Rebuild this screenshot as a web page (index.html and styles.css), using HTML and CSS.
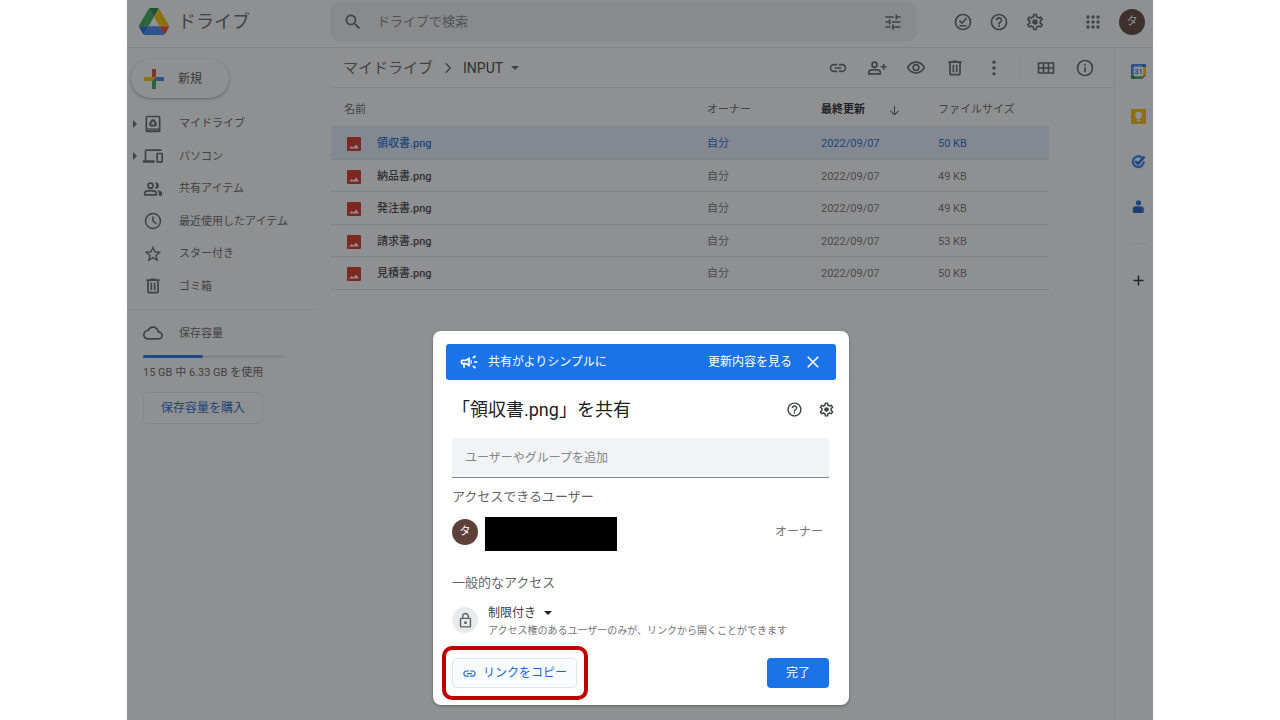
FILE: index.html
```html
<!DOCTYPE html>
<html lang="ja">
<head>
<meta charset="utf-8">
<meta name="viewport" content="width=device-width, initial-scale=1">
<title>INPUT - ドライブ</title>
<link rel="stylesheet" href="styles.css">
</head>
<body>
<svg class="sprite" aria-hidden="true">
  <symbol id="i-search" viewBox="0 0 24 24"><path d="M15.500 14h-.79l-.28-.27C15.410 12.590 16 11.110 16 9.500 16 5.910 13.090 3 9.500 3S3 5.910 3 9.500 5.910 16 9.500 16c1.610 0 3.090-.59 4.230-1.570l.27.28v.79l5 4.990L20.490 19l-4.990-5zm-6 0C7.010 14 5 11.990 5 9.500S7.010 5 9.500 5 14 7.010 14 9.500 11.990 14 9.500 14z"/></symbol>
  <symbol id="i-tune" viewBox="0 0 24 24"><path d="M3 17v2h6v-2H3zM3 5v2h10V5H3zm10 16v-2h8v-2h-8v-2h-2v6h2zM7 9v2H3v2h4v2h2V9H7zm14 4v-2H11v2h10zm-6-4h2V7h4V5h-4V3h-2v6z"/></symbol>
  <symbol id="i-offline" viewBox="0 0 24 24"><g fill="none" stroke="currentColor" stroke-width="2"><circle cx="12" cy="12" r="9"/><path d="M7.500 16.500h9M7.800 10.300l3 3 5.600-5.800"/></g></symbol>
  <symbol id="i-help" viewBox="0 0 24 24"><path d="M11 18h2v-2h-2v2zm1-16C6.480 2 2 6.480 2 12s4.480 10 10 10 10-4.480 10-10S17.520 2 12 2zm0 18c-4.410 0-8-3.590-8-8s3.590-8 8-8 8 3.590 8 8-3.590 8-8 8zm0-14c-2.210 0-4 1.790-4 4h2c0-1.100.9-2 2-2s2 .9 2 2c0 2-3 1.750-3 5h2c0-2.250 3-2.500 3-5 0-2.210-1.790-4-4-4z"/></symbol>
  <symbol id="i-settings" viewBox="0 0 24 24"><path d="M19.430 12.980c.04-.32.07-.64.07-.98 0-.34-.03-.66-.07-.98l2.110-1.650c.19-.15.24-.42.12-.64l-2-3.460c-.09-.16-.26-.25-.44-.25-.06 0-.12.01-.17.03l-2.490 1c-.52-.4-1.080-.73-1.690-.98l-.38-2.650C14.460 2.180 14.250 2 14 2h-4c-.25 0-.46.18-.49.42l-.38 2.650c-.61.25-1.170.59-1.690.98l-2.490-1c-.06-.02-.12-.03-.18-.03-.17 0-.34.09-.43.25l-2 3.460c-.13.22-.07.49.12.64l2.110 1.650c-.04.32-.07.65-.07.98 0 .33.03.66.07.98l-2.110 1.650c-.19.15-.24.42-.12.64l2 3.460c.09.16.26.25.44.25.06 0 .12-.01.17-.03l2.490-1c.52.4 1.080.73 1.690.98l.38 2.650c.03.24.24.42.49.42h4c.25 0 .46-.18.49-.42l.38-2.650c.61-.25 1.170-.59 1.690-.98l2.490 1c.06.02.12.03.18.03.17 0 .34-.09.43-.25l2-3.460c.12-.22.07-.49-.12-.64l-2.110-1.650zm-1.980-1.710c.04.31.05.52.05.73 0 .21-.02.43-.05.73l-.14 1.130.89.7 1.080.84-.7 1.210-1.270-.51-1.040-.42-.9.68c-.43.32-.84.56-1.250.73l-1.060.43-.16 1.130-.2 1.350h-1.400l-.19-1.350-.16-1.130-1.060-.43c-.43-.18-.83-.41-1.230-.71l-.91-.7-1.060.43-1.270.51-.7-1.210 1.080-.84.89-.7-.14-1.130c-.03-.31-.05-.54-.05-.74s.02-.43.05-.73l.14-1.130-.89-.7-1.080-.84.7-1.210 1.270.51 1.040.42.9-.68c.43-.32.84-.56 1.250-.73l1.060-.43.16-1.130.2-1.350h1.390l.19 1.350.16 1.130 1.060.43c.43.18.83.41 1.230.71l.91.7 1.060-.43 1.270-.51.7 1.210-1.070.85-.89.7.14 1.130z"/><circle cx="12" cy="12" r="3.300"/></symbol>
  <symbol id="i-apps" viewBox="0 0 24 24"><circle cx="6" cy="6" r="2"/><circle cx="12" cy="6" r="2"/><circle cx="18" cy="6" r="2"/><circle cx="6" cy="12" r="2"/><circle cx="12" cy="12" r="2"/><circle cx="18" cy="12" r="2"/><circle cx="6" cy="18" r="2"/><circle cx="12" cy="18" r="2"/><circle cx="18" cy="18" r="2"/></symbol>
  <symbol id="i-link" viewBox="0 0 24 24"><path d="M3.900 12c0-1.710 1.390-3.100 3.100-3.100h4V7H7c-2.760 0-5 2.240-5 5s2.240 5 5 5h4v-1.900H7c-1.710 0-3.100-1.390-3.100-3.100zM8 13h8v-2H8v2zm9-6h-4v1.900h4c1.710 0 3.100 1.390 3.100 3.100s-1.390 3.100-3.100 3.100h-4V17h4c2.760 0 5-2.240 5-5s-2.240-5-5-5z"/></symbol>
  <symbol id="i-person-add" viewBox="0 0 24 24"><g fill="none" stroke="currentColor" stroke-width="2"><circle cx="9" cy="8" r="3"/><path d="M2 19v-2c0-2 4-3 7-3s7 1 7 3v2zM20 7v7M16.500 10.500h7"/></g></symbol>
  <symbol id="i-eye" viewBox="0 0 24 24"><path d="M12 6c3.790 0 7.170 2.130 8.820 5.500C19.170 14.870 15.790 17 12 17s-7.170-2.130-8.820-5.500C4.830 8.130 8.210 6 12 6m0-2C7 4 2.730 7.110 1 11.500 2.730 15.890 7 19 12 19s9.270-3.110 11-7.500C21.270 7.110 17 4 12 4zm0 5c1.380 0 2.500 1.120 2.500 2.500S13.380 14 12 14s-2.500-1.120-2.500-2.500S10.620 9 12 9m0-2c-2.480 0-4.500 2.020-4.500 4.500S9.520 16 12 16s4.500-2.020 4.500-4.500S14.480 7 12 7z"/></symbol>
  <symbol id="i-trash" viewBox="0 0 24 24"><path d="M9 3v1H4v2h1v13c0 1.100.9 2 2 2h10c1.100 0 2-.9 2-2V6h1V4h-5V3H9zm-2 3h10v13H7V6zm2 2v9h2V8H9zm4 0v9h2V8h-2z"/></symbol>
  <symbol id="i-more" viewBox="0 0 24 24"><circle cx="12" cy="5" r="2"/><circle cx="12" cy="12" r="2"/><circle cx="12" cy="19" r="2"/></symbol>
  <symbol id="i-grid" viewBox="0 0 24 24"><path fill="none" stroke="currentColor" stroke-width="2" d="M3 6h18v12H3zM3 12h18M9 6v12M15 6v12"/></symbol>
  <symbol id="i-info" viewBox="0 0 24 24"><circle cx="12" cy="12" r="9" fill="none" stroke="currentColor" stroke-width="2"/><path d="M11 7h2v2h-2zM11 11h2v6h-2z"/></symbol>
  <symbol id="i-people" viewBox="0 0 24 24"><g fill="none" stroke="currentColor" stroke-width="2"><circle cx="9" cy="8" r="3"/><path d="M2 19v-2c0-2 4-3 7-3s7 1 7 3v2z"/></g><path d="M14.500 4.200c2.400-.8 4.700 1.200 4.500 3.800-.1 2.500-2.200 4.300-4.500 3.800 1.900-2.300 1.900-5.300 0-7.600zM17 13.200c3 .5 6 1.700 6 3.800v3h-4v-3c0-1.600-.8-2.800-2-3.800z"/></symbol>
  <symbol id="i-clock" viewBox="0 0 24 24"><g fill="none" stroke="currentColor" stroke-width="1.800"><circle cx="12" cy="12" r="9"/><path d="M12 6.500V12l4 3.500"/></g></symbol>
  <symbol id="i-star" viewBox="0 0 24 24"><path d="M22 9.240l-7.190-.62L12 2 9.190 8.630 2 9.240l5.460 4.730L5.820 21 12 17.270 18.180 21l-1.630-7.030L22 9.240zM12 15.400l-3.760 2.270 1-4.280-3.320-2.880 4.380-.38L12 6.100l1.710 4.040 4.380.38-3.320 2.880 1 4.280L12 15.400z"/></symbol>
  <symbol id="i-cloud" viewBox="0 0 24 24"><path d="M19.350 10.040C18.670 6.590 15.640 4 12 4 9.110 4 6.600 5.640 5.350 8.040 2.340 8.360 0 10.910 0 14c0 3.310 2.690 6 6 6h13c2.760 0 5-2.240 5-5 0-2.640-2.050-4.780-4.650-4.960zM19 18H6c-2.210 0-4-1.790-4-4 0-2.050 1.530-3.760 3.560-3.970l1.070-.11.5-.95C8.080 7.140 9.940 6 12 6c2.620 0 4.880 1.860 5.390 4.430l.3 1.500 1.530.11c1.560.1 2.780 1.410 2.780 2.960 0 1.650-1.350 3-3 3z"/></symbol>
  <symbol id="i-devices" viewBox="0 0 24 24"><path d="M4 6h18V4H4c-1.100 0-2 .9-2 2v11H0v3h14v-3H4V6zm19 2h-6c-.55 0-1 .45-1 1v10c0 .55.45 1 1 1h6c.55 0 1-.45 1-1V9c0-.55-.45-1-1-1zm-1 10h-4v-8h4v8z"/></symbol>
  <symbol id="i-mydrive" viewBox="0 0 24 24"><rect x="4" y="3" width="16" height="18" rx="1" fill="none" stroke="currentColor" stroke-width="2"/><path opacity=".7" d="M4 17h16v4H4z"/><path fill="none" stroke="currentColor" stroke-width="2.400" stroke-linejoin="round" d="M11 7.500h2l2.600 4.500-1 1.700H9.400l-1-1.700z"/></symbol>
  <symbol id="i-image" viewBox="0 0 14 14"><rect width="14" height="14" rx="1" fill="#d93025"/><path fill="#fff" d="M2 11.500L4.700 9l1.700 1.500L9.200 7.500l2.800 4z"/></symbol>
  <symbol id="i-arrow" viewBox="0 0 24 24"><path fill="none" stroke="currentColor" stroke-width="2" d="M12 3v17M4.500 12.500L12 20l7.500-7.500"/></symbol>
  <symbol id="i-close" viewBox="0 0 24 24"><path fill="none" stroke="currentColor" stroke-width="2.200" d="M5 5l14 14M19 5L5 19"/></symbol>
  <symbol id="i-campaign" viewBox="0 0 24 24"><path d="M18 11v2h4v-2zM16 17.610l3.200 2.390 1.200-1.600-3.200-2.400zM20.400 5.600L19.200 4 16 6.400 17.200 8zM4 9c-1.100 0-2 .9-2 2v2c0 1.100.9 2 2 2h1v4h2v-4h1l5 3V6L8 9H4zm5.030 1.710L11 9.530v4.940l-1.970-1.180-.48-.29H4v-2h4.550zM15.500 12c0-1.330-.58-2.530-1.500-3.350v6.690c.92-.81 1.500-2.010 1.500-3.340z"/></symbol>
  <symbol id="i-lock" viewBox="0 0 24 24"><path d="M18 8h-1V6c0-2.760-2.240-5-5-5S7 3.240 7 6v2H6c-1.100 0-2 .9-2 2v10c0 1.100.9 2 2 2h12c1.100 0 2-.9 2-2V10c0-1.100-.9-2-2-2zM9 6c0-1.660 1.340-3 3-3s3 1.340 3 3v2H9V6zm9 14H6V10h12v10zm-6-3c1.100 0 2-.9 2-2s-.9-2-2-2-2 .9-2 2 .9 2 2 2z"/></symbol>
  <symbol id="i-plus" viewBox="0 0 24 24"><path fill="none" stroke="currentColor" stroke-width="2.400" d="M12 4v16M4 12h16"/></symbol>
</svg>

<div class="app">
  <header class="topbar">
    <a class="brand" href="#">
      <svg class="brand-logo" viewBox="0 0 87.300 78" aria-hidden="true">
        <path fill="#1967d2" d="M6.600 66.850l3.850 6.650c.8 1.400 1.950 2.500 3.300 3.300L27.500 53H0c0 1.550.4 3.100 1.200 4.500z"/>
        <path fill="#34a853" d="M43.650 25L29.900 1.200c-1.350.8-2.500 1.900-3.300 3.300l-25.400 44A9.060 9.060 0 0 0 0 53h27.500z"/>
        <path fill="#ea4335" d="M73.550 76.800c1.350-.8 2.500-1.900 3.300-3.300l1.600-2.750 7.650-13.250c.8-1.400 1.200-2.950 1.200-4.500H59.800l5.850 11.500z"/>
        <path fill="#188038" d="M43.650 25L57.400 1.200C56.050.4 54.500 0 52.900 0H34.400c-1.600 0-3.150.45-4.500 1.200z"/>
        <path fill="#4285f4" d="M59.800 53H27.500L13.750 76.800c1.350.8 2.900 1.200 4.500 1.200h50.800c1.600 0 3.150-.45 4.500-1.200z"/>
        <path fill="#fbbc04" d="M73.400 26.500l-12.700-22c-.8-1.400-1.950-2.500-3.300-3.300L43.650 25l16.150 28h27.450c0-1.550-.4-3.100-1.200-4.500z"/>
      </svg>
      <span>ドライブ</span>
    </a>
    <form class="search" role="search">
      <svg class="icon"><use href="#i-search"/></svg>
      <input class="search-input" type="search" placeholder="ドライブで検索" aria-label="ドライブで検索">
      <button class="icon-btn" type="button" aria-label="検索オプション"><svg class="icon"><use href="#i-tune"/></svg></button>
    </form>
    <div class="top-actions">
      <button class="icon-btn" aria-label="オフライン"><svg class="icon"><use href="#i-offline"/></svg></button>
      <button class="icon-btn" aria-label="サポート"><svg class="icon"><use href="#i-help"/></svg></button>
      <button class="icon-btn" aria-label="設定"><svg class="icon"><use href="#i-settings"/></svg></button>
      <button class="icon-btn apps-btn" aria-label="アプリ"><svg class="icon"><use href="#i-apps"/></svg></button>
      <button class="avatar" aria-label="アカウント">タ</button>
    </div>
  </header>

  <div class="body">
    <aside class="sidebar">
      <button class="new-btn">
        <svg class="icon" viewBox="0 0 20 20" aria-hidden="true"><path fill="#ea4335" d="M8 0h4v8H8z"/><path fill="#fbbc04" d="M0 8h12l-4 4H0z"/><path fill="#4285f4" d="M12 8h8v4h-8z"/><path fill="#34a853" d="M8 12l4-4v12H8z"/></svg>
        <span>新規</span>
      </button>
      <nav class="nav">
        <a class="nav-item expandable" href="#"><svg class="icon"><use href="#i-mydrive"/></svg><span>マイドライブ</span></a>
        <a class="nav-item expandable" href="#"><svg class="icon"><use href="#i-devices"/></svg><span>パソコン</span></a>
        <a class="nav-item" href="#"><svg class="icon"><use href="#i-people"/></svg><span>共有アイテム</span></a>
        <a class="nav-item" href="#"><svg class="icon"><use href="#i-clock"/></svg><span>最近使用したアイテム</span></a>
        <a class="nav-item" href="#"><svg class="icon"><use href="#i-star"/></svg><span>スター付き</span></a>
        <a class="nav-item" href="#"><svg class="icon"><use href="#i-trash"/></svg><span>ゴミ箱</span></a>
      </nav>
      <section class="storage">
        <a class="nav-item" href="#"><svg class="icon"><use href="#i-cloud"/></svg><span>保存容量</span></a>
        <div class="storage-detail">
          <div class="meter" role="img" aria-label="15 GB 中 6.33 GB を使用"><div class="meter-fill" style="width:42%"></div></div>
          <p class="storage-text">15 GB 中 6.33 GB を使用</p>
          <button class="buy-btn">保存容量を購入</button>
        </div>
      </section>
    </aside>

    <main class="main">
      <div class="toolbar">
        <nav class="crumbs" aria-label="パンくず">
          <a class="crumb" href="#">マイドライブ</a>
          <svg class="crumb-sep" viewBox="0 0 8 12" aria-hidden="true"><path fill="none" stroke="currentColor" stroke-width="1.200" d="M2 2l4 4-4 4"/></svg>
          <button class="crumb current">INPUT<span class="caret"></span></button>
        </nav>
        <div class="tools">
          <button class="icon-btn" aria-label="リンクを取得"><svg class="icon"><use href="#i-link"/></svg></button>
          <button class="icon-btn" aria-label="共有"><svg class="icon"><use href="#i-person-add"/></svg></button>
          <button class="icon-btn" aria-label="プレビュー"><svg class="icon"><use href="#i-eye"/></svg></button>
          <button class="icon-btn" aria-label="削除"><svg class="icon"><use href="#i-trash"/></svg></button>
          <button class="icon-btn" aria-label="その他の操作"><svg class="icon"><use href="#i-more"/></svg></button>
          <span class="tool-divider"></span>
          <button class="icon-btn" aria-label="ギャラリー表示"><svg class="icon"><use href="#i-grid"/></svg></button>
          <button class="icon-btn" aria-label="詳細を表示"><svg class="icon"><use href="#i-info"/></svg></button>
        </div>
      </div>
      <table class="files">
        <colgroup><col><col class="col-owner"><col class="col-date"><col class="col-size"></colgroup>
        <thead>
          <tr><th>名前</th><th>オーナー</th><th class="sorted"><span class="sort">最終更新<svg class="sort-arrow"><use href="#i-arrow"/></svg></span></th><th>ファイルサイズ</th></tr>
        </thead>
        <tbody>
          <tr class="selected"><td><span class="file"><svg class="file-icon"><use href="#i-image"/></svg>領収書.png</span></td><td>自分</td><td>2022/09/07</td><td>50 KB</td></tr>
          <tr><td><span class="file"><svg class="file-icon"><use href="#i-image"/></svg>納品書.png</span></td><td>自分</td><td>2022/09/07</td><td>49 KB</td></tr>
          <tr><td><span class="file"><svg class="file-icon"><use href="#i-image"/></svg>発注書.png</span></td><td>自分</td><td>2022/09/07</td><td>49 KB</td></tr>
          <tr><td><span class="file"><svg class="file-icon"><use href="#i-image"/></svg>請求書.png</span></td><td>自分</td><td>2022/09/07</td><td>53 KB</td></tr>
          <tr><td><span class="file"><svg class="file-icon"><use href="#i-image"/></svg>見積書.png</span></td><td>自分</td><td>2022/09/07</td><td>50 KB</td></tr>
        </tbody>
      </table>
    </main>

    <aside class="side-panel">
      <button class="panel-btn" aria-label="カレンダー"><svg class="panel-icon" viewBox="0 0 16 16"><path fill="#4285f4" d="M1 0h11v3H3v9H0V1z"/><path fill="#1967d2" d="M12 0h3l1 1v3h-4z"/><path fill="#fbbc04" d="M13 3h3v9h-3z"/><path fill="#34a853" d="M3 13h9v3H3z"/><path fill="#188038" d="M0 12h4v4H1l-1-1z"/><path fill="#ea4335" d="M12 12h4l-4 4z"/><path fill="#fff" d="M3 3h10v10H3z"/><text class="cal-day" x="8" y="11" text-anchor="middle">31</text></svg></button>
      <button class="panel-btn" aria-label="Keep"><svg class="panel-icon" viewBox="0 0 16 16"><rect width="16" height="16" rx="1" fill="#fbbc04"/><circle cx="8" cy="6.500" r="3.500" fill="#fff"/><path fill="#fff" d="M6 8h4v3H6zM6 11.700h4V13H6z"/></svg></button>
      <button class="panel-btn" aria-label="ToDo リスト"><svg class="panel-icon" viewBox="0 0 16 16"><path fill="none" stroke="#2684fc" stroke-width="2.600" d="M11.500 3.800A5.700 5.700 0 1 0 13.500 8"/><path fill="none" stroke="#1967d2" stroke-width="2.600" d="M4.500 7.500L7.500 10.300 14.500 2.700"/></svg></button>
      <button class="panel-btn" aria-label="連絡先"><svg class="panel-icon" viewBox="0 0 16 16"><circle cx="8" cy="4" r="2.800" fill="#1967d2"/><path fill="#4285f4" d="M5 8h6a3 3 0 0 1 3 3v2a2 2 0 0 1-2 2H4a2 2 0 0 1-2-2v-2a3 3 0 0 1 3-3z"/><path fill="#185abc" d="M5 8h5a2 2 0 0 1 2 2v5H4a2 2 0 0 1-2-2v-2a3 3 0 0 1 3-3z"/></svg></button>
      <hr class="panel-line">
      <button class="panel-btn add" aria-label="アドオンを取得"><svg class="panel-icon"><use href="#i-plus"/></svg></button>
    </aside>
  </div>

  <div class="scrim">
    <section class="dialog" role="dialog" aria-modal="true" aria-labelledby="dialog-title">
      <div class="banner">
        <svg class="banner-icon"><use href="#i-campaign"/></svg>
        <span class="banner-text">共有がよりシンプルに</span>
        <a class="banner-link" href="#">更新内容を見る</a>
        <button class="banner-close" aria-label="閉じる"><svg class="close-icon"><use href="#i-close"/></svg></button>
      </div>
      <div class="title-row">
        <h1 class="title" id="dialog-title">「領収書.png」を共有</h1>
        <button class="title-btn" aria-label="ヘルプ"><svg class="icon-small"><use href="#i-help"/></svg></button>
        <button class="title-btn" aria-label="共有設定"><svg class="icon-small"><use href="#i-settings"/></svg></button>
      </div>
      <div class="dialog-body">
        <input class="people-input" type="text" placeholder="ユーザーやグループを追加" aria-label="ユーザーやグループを追加">
        <h2 class="subhead">アクセスできるユーザー</h2>
        <div class="person">
          <span class="avatar">タ</span>
          <span class="redacted"></span>
          <span class="role">オーナー</span>
        </div>
        <h2 class="subhead general">一般的なアクセス</h2>
        <div class="access">
          <span class="lock"><svg class="icon-small"><use href="#i-lock"/></svg></span>
          <div class="access-text">
            <button class="access-level">制限付き<span class="caret"></span></button>
            <p class="access-note">アクセス権のあるユーザーのみが、リンクから開くことができます</p>
          </div>
        </div>
        <div class="dialog-actions">
          <div class="highlight"><button class="copy-btn"><svg class="link-icon"><use href="#i-link"/></svg>リンクをコピー</button></div>
          <button class="done-btn">完了</button>
        </div>
      </div>
    </section>
  </div>
</div>
</body>
</html>
```

FILE: styles.css
```css
* {
  box-sizing: border-box;
}

body {
  margin: 0;
  background: #fff;
  color: #3c4043;
  font-family: Roboto, "Noto Sans CJK JP", sans-serif;
  font-size: 11px;
  line-height: 16px;
}

button,
input {
  margin: 0;
  padding: 0;
  border: 0;
  background: none;
  color: inherit;
  font: inherit;
}

a {
  color: inherit;
  text-decoration: none;
}

h1,
h2,
p {
  margin: 0;
  font-weight: 400;
}

svg {
  display: block;
  flex: none;
  fill: currentColor;
}

.sprite {
  position: absolute;
  width: 0;
  height: 0;
}

.icon {
  width: 20px;
  height: 20px;
}

.icon-small {
  width: 17px;
  height: 17px;
}

.icon-btn {
  display: flex;
  align-items: center;
  justify-content: center;
  width: 36px;
  height: 36px;
}

.caret {
  border: 4px solid transparent;
  border-top-color: currentColor;
  border-bottom: 0;
}

.avatar {
  display: flex;
  align-items: center;
  justify-content: center;
  flex: none;
  width: 26px;
  height: 26px;
  border-radius: 50%;
  background: #5d4037;
  color: #fff;
  font-size: 11px;
}

/* Page frame */

.app {
  position: relative;
  display: flex;
  flex-direction: column;
  max-width: 1026px;
  min-height: 100vh;
  margin: 0 auto;
}

.topbar {
  display: flex;
  align-items: flex-start;
  height: 48px;
  border-bottom: 1px solid #e8eaed;
  color: #5f6368;
}

.brand {
  display: flex;
  align-items: center;
  gap: 9px;
  flex: none;
  width: 203px;
  height: 42px;
  padding-left: 12px;
  font-size: 18px;
}

.brand span {
  padding-top: 2px;
}

.brand-logo {
  width: 30px;
  height: 27px;
}

.search {
  display: flex;
  align-items: center;
  flex: 1;
  max-width: 586px;
  height: 39px;
  margin-top: 2px;
  padding: 0 5px 0 13px;
  border-radius: 8px;
  background: #f1f3f4;
}

.search-input {
  flex: 1;
  min-width: 0;
  padding-left: 14px;
  font-size: 13px;
  outline: 0;
}

.search-input::placeholder,
.people-input::placeholder {
  color: #80868b;
  opacity: 1;
}

.top-actions {
  display: flex;
  align-items: center;
  height: 43px;
  margin-left: auto;
  padding-right: 8px;
}

.apps-btn {
  margin: 0 8px 0 22px;
}

.body {
  display: flex;
  flex: 1;
}

/* Left navigation */

.sidebar {
  flex: none;
  width: 204px;
  padding-top: 11px;
  color: #5f6368;
}

.new-btn {
  display: flex;
  align-items: center;
  gap: 14px;
  width: 98px;
  height: 39px;
  margin-left: 4px;
  padding-left: 13px;
  border-radius: 20px;
  box-shadow: 0 1px 2px rgba(60, 64, 67, .3), 0 1px 3px 1px rgba(60, 64, 67, .15);
  color: #4d5156;
  font-size: 12px;
}

.nav {
  padding: 9px 0 7px;
}

.nav-item {
  display: flex;
  align-items: center;
  gap: 16px;
  height: 32px;
  padding-left: 16px;
}

.nav .nav-item:nth-child(odd) {
  height: 33px;
}

.nav-item span {
  padding-top: 1px;
}

.nav-item.expandable {
  padding-left: 6px;
}

.expandable::before {
  margin-right: -10px;
  border: 4px solid transparent;
  border-left-color: currentColor;
  border-right: 0;
  content: "";
}

.storage {
  width: 190px;
  padding-top: 7px;
  border-top: 1px solid #e8eaed;
}

.storage-detail {
  padding: 6px 0 0 16px;
}

.meter {
  width: 142px;
  height: 3px;
  border-radius: 2px;
  background: #e8eaed;
}

.meter-fill {
  height: 3px;
  border-radius: 2px;
  background: #1a73e8;
}

.storage-text {
  padding: 7px 0 11px;
}

.buy-btn {
  width: 120px;
  height: 32px;
  border: 1px solid #e8eaed;
  border-radius: 4px;
  color: #1967d2;
  font-size: 12px;
}

/* File list */

.main {
  flex: 1;
  min-width: 0;
}

.toolbar {
  display: flex;
  align-items: center;
  justify-content: space-between;
  height: 40px;
  padding: 0 10px 0 12px;
  border-bottom: 1px solid #e8eaed;
  color: #5f6368;
}

.crumbs {
  display: flex;
  align-items: center;
  gap: 10px;
  font-size: 15px;
}

.crumb-sep {
  width: 10px;
  height: 14px;
}

.current {
  display: flex;
  align-items: center;
  gap: 8px;
  color: #3c4043;
  font-size: 14px;
}

.current .caret {
  color: #5f6368;
}

.tools {
  display: flex;
  align-items: center;
}

.tools .icon-btn {
  width: 39px;
}

.tool-divider {
  width: 1px;
  height: 26px;
  margin: 0 6px;
  background: #f1f3f4;
}

.files {
  width: calc(100% - 65px);
  border-spacing: 0;
  table-layout: fixed;
  color: #70757a;
}

.col-owner {
  width: 114px;
}

.col-date {
  width: 117px;
}

.col-size {
  width: 111px;
}

.files th,
.files td {
  padding: 2px 0 0;
  border-bottom: 1px solid #e3e5e8;
  text-align: left;
}

.files th {
  height: 39px;
  padding-top: 6px;
  color: #5f6368;
  font-weight: 400;
}

.files th:first-child {
  padding-left: 13px;
}

.files .sorted {
  color: #202124;
  font-weight: 700;
}

.sort {
  display: flex;
  align-items: center;
  gap: 23px;
}

.sort-arrow {
  width: 13px;
  height: 13px;
  color: #5f6368;
}

.files td {
  height: 32px;
}

.files tr:nth-child(odd) td {
  height: 33px;
}

.file {
  display: flex;
  align-items: center;
  gap: 16px;
  padding-left: 16px;
  color: #3c4043;
  font-weight: 500;
}

.file-icon {
  width: 14px;
  height: 14px;
}

.selected,
.selected .file {
  color: #1967d2;
}

.selected td {
  background: #e8f0fe;
}

/* Right app strip */

.side-panel {
  display: flex;
  flex-direction: column;
  align-items: center;
  flex: none;
  width: 39px;
  padding: 1px 0 0 8px;
  border-left: 1px solid #e8eaed;
}

.panel-btn {
  display: flex;
  align-items: center;
  justify-content: center;
  width: 30px;
  height: 45px;
}

.panel-icon {
  width: 15px;
  height: 15px;
}

.cal-day {
  fill: #1967d2;
  font-size: 8px;
  font-weight: 500;
}

.panel-line {
  width: 16px;
  margin: 14px 0;
  border: 0;
  border-top: 1px solid #e8eaed;
}

.add {
  color: #202124;
}

/* Share dialog */

.scrim {
  position: absolute;
  inset: 0;
  display: flex;
  align-items: flex-end;
  justify-content: center;
  padding: 16px 0 15px 2px;
  background: rgba(32, 33, 36, .5);
}

.dialog {
  width: 416px;
  max-width: 100%;
  padding: 13px 13px 17px;
  border-radius: 8px;
  background: #fff;
  box-shadow: 0 1px 3px rgba(32, 33, 36, .4);
}

.banner {
  display: flex;
  align-items: center;
  height: 36px;
  padding: 0 14px 0 13px;
  border-radius: 3px;
  background: #1a73e8;
  color: #fff;
  font-size: 12px;
}

.banner-icon {
  width: 20px;
  height: 20px;
}

.banner-text {
  flex: 1;
  padding-left: 9px;
}

.banner-close {
  padding-left: 12px;
}

.close-icon {
  width: 18px;
  height: 18px;
}

.title-row {
  display: flex;
  align-items: center;
  gap: 12px;
  height: 58px;
  padding-left: 6px;
}

.title {
  flex: 1;
  padding-top: 1px;
  color: #202124;
  font-size: 18px;
  line-height: 24px;
}

.title-btn {
  display: flex;
  align-items: center;
  justify-content: center;
  width: 20px;
  height: 20px;
}

.dialog-body {
  padding: 0 7px 0 6px;
}

.people-input {
  display: block;
  width: 100%;
  height: 40px;
  padding: 0 13px;
  border-bottom: 1px solid #80868b;
  border-radius: 4px 4px 0 0;
  background: #f1f3f4;
  font-size: 12px;
}

.subhead {
  color: #5f6368;
  font-size: 13px;
  line-height: 37px;
}

.general {
  margin-top: 17px;
}

.person {
  display: flex;
  align-items: center;
  height: 30px;
  margin-top: 2px;
  padding-right: 6px;
}

.redacted {
  align-self: flex-start;
  width: 132px;
  height: 34px;
  margin-left: 7px;
  background: #000;
}

.role {
  margin-left: auto;
  color: #70757a;
  font-size: 12px;
}

.access {
  display: flex;
  gap: 10px;
  padding-top: 3px;
}

.lock {
  display: flex;
  align-items: center;
  justify-content: center;
  width: 26px;
  height: 26px;
  margin-top: 3px;
  border-radius: 50%;
  background: #e8eaed;
  color: #5f6368;
}

.access-level {
  display: flex;
  align-items: center;
  gap: 8px;
  font-size: 12px;
  line-height: 18px;
}

.access-level .caret {
  color: #202124;
}

.access-note {
  color: #70757a;
  font-size: 10px;
  line-height: 18px;
}

.dialog-actions {
  display: flex;
  align-items: center;
  justify-content: space-between;
  margin-top: 18px;
}

.highlight {
  position: relative;
}

.highlight::after {
  position: absolute;
  inset: -12px -11px -12px -10px;
  border: 4px solid #c00000;
  border-radius: 10px;
  content: "";
  pointer-events: none;
}

.copy-btn,
.done-btn {
  height: 30px;
  border-radius: 4px;
  font-size: 12px;
}

.copy-btn {
  display: flex;
  align-items: center;
  gap: 6px;
  width: 125px;
  padding-left: 9px;
  border: 1px solid #e3e5e8;
  background: #f8fbff;
  color: #1967d2;
}

.link-icon {
  width: 15px;
  height: 15px;
}

.done-btn {
  width: 62px;
  background: #1a73e8;
  color: #fff;
}
```
